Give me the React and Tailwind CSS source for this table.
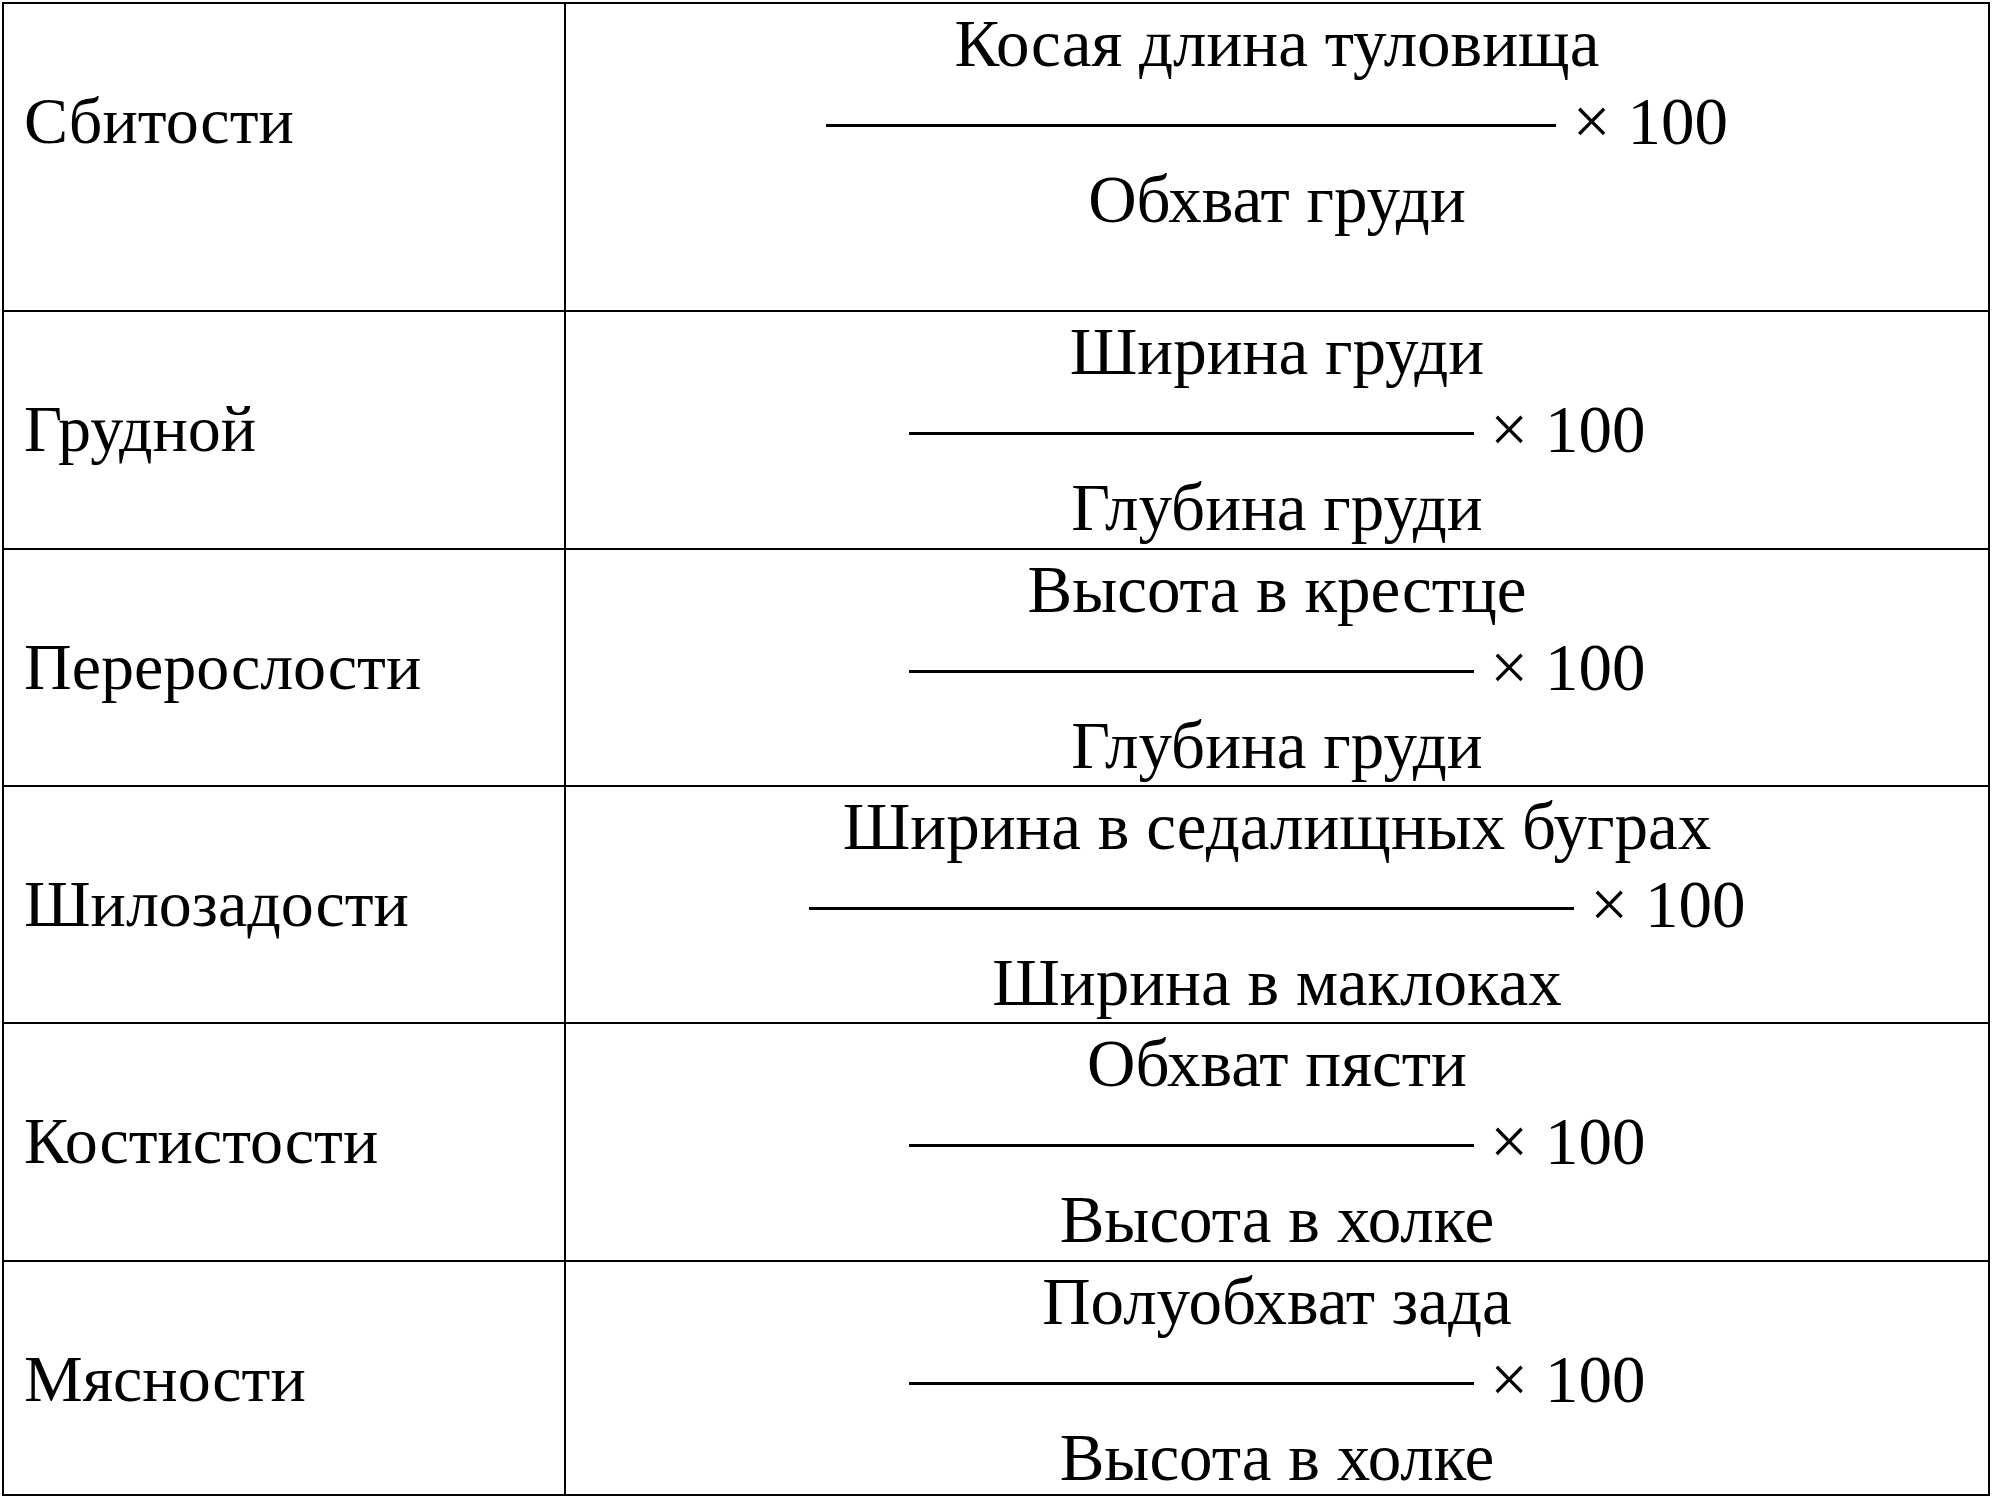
const ROWS = [
  {
    label: "Сбитости",
    top: "Косая длина туловища",
    bottom: "Обхват груди",
    line: "w-[730px]",
    height: "h-[306px]",
  },
  {
    label: "Грудной",
    top: "Ширина груди",
    bottom: "Глубина груди",
    line: "w-[565px]",
    height: "h-[238px]",
  },
  {
    label: "Перерослости",
    top: "Высота в крестце",
    bottom: "Глубина груди",
    line: "w-[565px]",
    height: "h-[237px]",
  },
  {
    label: "Шилозадости",
    top: "Ширина в седалищных буграх",
    bottom: "Ширина в маклоках",
    line: "w-[765px]",
    height: "h-[237px]",
  },
  {
    label: "Костистости",
    top: "Обхват пясти",
    bottom: "Высота в холке",
    line: "w-[565px]",
    height: "h-[238px]",
  },
  {
    label: "Мясности",
    top: "Полуобхват зада",
    bottom: "Высота в холке",
    line: "w-[565px]",
    height: "h-[234px]",
  },
];

function IndexRow({ row, first }) {
  return (
    <div
      className={`grid grid-cols-[562px_1fr] ${row.height} ${
        first ? "" : "border-t-2 border-black"
      }`}
    >
      <div className="border-r-2 border-black pl-[20px] pt-[78px] text-[66px]">
        <p className="leading-[78px] whitespace-nowrap">{row.label}</p>
      </div>
      <div className="flex flex-col items-center leading-[78px] whitespace-nowrap text-[67px]">
        <p>{row.top}</p>
        <p>
          <span className={`inline-block h-[3px] bg-black align-[17px] ${row.line}`} />{" "}
          × 100
        </p>
        <p>{row.bottom}</p>
      </div>
    </div>
  );
}

export default function App() {
  return (
    <div className="w-[1996px] h-[1502px] bg-white pt-[2px] text-black font-['Liberation_Serif',serif]">
      <div className="ml-[2px] w-[1988px] border-2 border-black">
        {ROWS.map((row, i) => (
          <IndexRow key={row.label} row={row} first={i === 0} />
        ))}
      </div>
    </div>
  );
}
